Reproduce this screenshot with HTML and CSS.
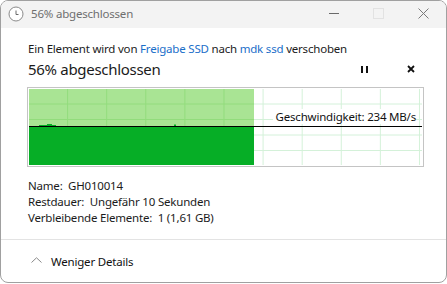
FILE: index.html
```html
<!DOCTYPE html>
<html>
    <head>
        <meta charset="UTF-8" />
        <title>56% abgeschlossen</title>
        <link rel="stylesheet" href="styles.css">
    </head>
    <body>
        <div class="window">
            <div class="titlebar">
                <svg class="clock" width="16" height="16" viewBox="0 0 16 16">
                    <circle cx="8" cy="8" r="7" fill="#fff" stroke="#8a8a8a" stroke-width="1" />
                    <path d="M8 4.5 V8.5 H10.5" fill="none" stroke="#6a6a6a" stroke-width="1" />
                </svg>
                <span class="titleText">56% abgeschlossen</span>
                <div class="winControls">
                    <div class="winBtn"><span class="minIcon"></span></div>
                    <div class="winBtn"><span class="maxIcon"></span></div>
                    <div class="winBtn">
                        <svg width="11" height="11" viewBox="0 0 11 11">
                            <path d="M0.5 0.5 L10.5 10.5 M10.5 0.5 L0.5 10.5" stroke="#7a7a7a" stroke-width="1" />
                        </svg>
                    </div>
                </div>
            </div>

            <div class="content">
                <div class="fromTo">
                    Ein Element wird von <span class="link">Freigabe SSD</span> nach <span class="link">mdk ssd</span> verschoben
                </div>
                <div class="status">
                    <span class="percent">56% abgeschlossen</span>
                    <span class="pauseIcon"><i></i><i></i></span>
                    <svg class="cancelIcon" width="8" height="8" viewBox="0 0 8 8">
                        <path d="M1 1 L7 7 M7 1 L1 7" stroke="#111" stroke-width="1.8" />
                    </svg>
                </div>

                <div class="graph">
                    <div class="grid">
                        <div class="fill">
                            <div class="fillTop">
                                <svg width="225" height="37" viewBox="0 0 225 37">
                                    <path d="M10 37 L10 36 L18 36 L18 35 L23 35 L23 36 L27 36 L27 37 Z" fill="#06ae26" />
                                    <rect x="145" y="35.5" width="2" height="1.5" fill="#06ae26" />
                                </svg>
                            </div>
                            <div class="fillBottom"></div>
                        </div>
                        <div class="speedLine"></div>
                        <div class="speedLabel">Geschwindigkeit: 234 MB/s</div>
                    </div>
                </div>

                <div class="details">
                    <div>Name:&nbsp; GH010014</div>
                    <div>Restdauer:&nbsp; Ungefähr 10 Sekunden</div>
                    <div>Verbleibende Elemente:&nbsp; 1 (1,61 GB)</div>
                </div>
            </div>

            <div class="footer">
                <svg class="chevron" width="11" height="6" viewBox="0 0 11 6">
                    <path d="M0.5 5.5 L5.5 0.8 L10.5 5.5" fill="none" stroke="#8a8a8a" stroke-width="1" />
                </svg>
                <span>Weniger Details</span>
            </div>
        </div>
    </body>
</html>
```

FILE: styles.css
```css
body {
    margin: 0;
    background: #ffffff;
    font-family: "Noto Sans", "Open Sans", sans-serif;
    font-size: 11.5px;
    letter-spacing: -0.2px;
    color: #1b1b1b;
}
.window {
    width: 445px;
    height: 281px;
    border: 1px solid #a0a0a0;
    border-radius: 8px;
    overflow: hidden;
    display: flex;
    flex-direction: column;
    background: #ffffff;
}
.titlebar {
    height: 27px;
    background: #f3f3f3;
    display: flex;
    align-items: center;
    padding-left: 7px;
    flex-shrink: 0;
}
.clock {
    margin-top: -2px;
}
.titleText {
    margin-left: 7px;
    margin-top: -2px;
    color: #6f6f6f;
}
.winControls {
    margin-left: auto;
    display: flex;
    height: 100%;
}
.winBtn {
    width: 45px;
    display: flex;
    align-items: center;
    justify-content: center;
    margin-top: -2px;
}
.minIcon {
    width: 10px;
    height: 1px;
    background: #6a6a6a;
}
.maxIcon {
    width: 9px;
    height: 9px;
    border: 1px solid #e2e2e2;
}
.content {
    padding: 0 26px 0 27px;
}
.fromTo {
    margin-top: 13px;
    line-height: 16px;
}
.link {
    color: #1a6ec9;
}
.status {
    display: flex;
    align-items: center;
    height: 24px;
}
.percent {
    font-size: 15px;
    letter-spacing: -0.3px;
}
.pauseIcon {
    margin-left: auto;
    display: flex;
    gap: 3px;
    margin-right: 39px;
}
.pauseIcon i {
    width: 2px;
    height: 7px;
    background: #111;
}
.cancelIcon {
    margin-right: 5px;
}
.graph {
    margin-top: 6px;
    margin-left: -1px;
    width: 393px;
    border: 1px solid #c4c4c4;
    padding: 1px;
    background: #ffffff;
}
.grid {
    position: relative;
    height: 76px;
    background-image:
        linear-gradient(to right, transparent 38px, #d3f1d8 38px, #d3f1d8 39.1px),
        linear-gradient(to bottom, transparent 14.2px, #d3f1d8 14.2px, #d3f1d8 15.2px);
    background-size: 39.1px 100%, 100% 15.5px;
}
.fill {
    position: absolute;
    left: 0;
    top: 0;
    bottom: 0;
    width: 225px;
    display: flex;
    flex-direction: column;
}
.fillTop {
    height: 37px;
    display: flex;
    background-color: #a9e494;
    background-image:
        linear-gradient(to right, transparent 38px, #92dc7c 38px, #92dc7c 39.1px),
        linear-gradient(to bottom, transparent 14.2px, #92dc7c 14.2px, #92dc7c 15.2px);
    background-size: 39.1px 100%, 100% 15.5px;
}
.fillBottom {
    flex: 1;
    background: #06ae26;
}
.speedLine {
    position: absolute;
    left: 0;
    right: 0;
    top: 37px;
    height: 1px;
    background: #000;
}
.speedLabel {
    position: absolute;
    right: 6px;
    top: 20px;
    line-height: 15px;
    padding-left: 3px;
    background: #ffffff;
    color: #111;
}
.details {
    margin-top: 11px;
    line-height: 16px;
}
.footer {
    margin-top: auto;
    height: 42px;
    border-top: 1px solid #e3e3e3;
    display: flex;
    align-items: center;
    padding-left: 30px;
    gap: 9px;
    color: #111;
}
.chevron {
    margin-top: -2px;
}
```
